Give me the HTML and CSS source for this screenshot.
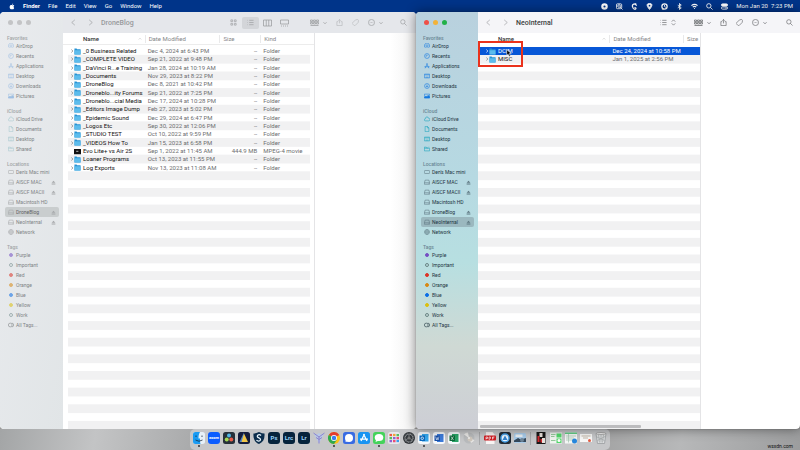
FILE: index.html
```html
<!DOCTYPE html>
<html lang="en">
<head>
<meta charset="utf-8">
<title>Finder</title>
<link rel="stylesheet" href="styles.css">
</head>
<body>
<svg class="sprite" aria-hidden="true">
  <symbol id="apple" viewBox="0 0 16 16"><path fill="currentColor" d="M11 0c.2 1.800-1.400 3.600-3 3.600C7.800 2 9.300.2 11 0zM13.800 11.700c-.8 1.900-2 3.900-3.500 3.900-1 0-1.300-.6-2.500-.6s-1.600.6-2.500.6C3 15.600.8 10.800 2 7.600 2.700 5.500 4.300 4.200 6 4.200c1.100 0 1.800.6 2.600.6s1.600-.7 3-.7c1 0 2 .5 2.600 1.400-2.700 1.600-2.200 5.200-.4 6.200z"/></symbol>
  <symbol id="back" viewBox="0 0 16 16"><path d="M11 2 4 8l7 6"/></symbol>
  <symbol id="forward" viewBox="0 0 16 16"><path d="m5 2 7 6-7 6"/></symbol>
  <symbol id="down" viewBox="0 0 16 16"><path d="m2 5 6 6 6-6"/></symbol>
  <symbol id="up" viewBox="0 0 16 16"><path d="m3 10 5-5 5 5"/></symbol>
  <symbol id="updown" viewBox="0 0 16 16"><path d="m4 6 4-4 4 4M4 10l4 4 4-4"/></symbol>
  <symbol id="grid" viewBox="0 0 16 16"><path d="M2 2h4v4H2zM10 2h4v4h-4zM2 10h4v4H2zM10 10h4v4h-4z"/></symbol>
  <symbol id="list" viewBox="0 0 16 16"><path d="M1 3h1M1 8h1M1 13h1M5 3h10M5 8h10M5 13h10"/></symbol>
  <symbol id="columns" viewBox="0 0 18 16"><path d="M1 2h16v12H1zM6.500 2v12M11.500 2v12"/></symbol>
  <symbol id="gallery" viewBox="0 0 18 16"><path d="M1 2h16v8H1zM2 14h2M6 14h2M10 14h2M14 14h2"/></symbol>
  <symbol id="group" viewBox="0 0 18 16"><path d="M1 2h4v3H1zM7 2h4v3H7zM13 2h4v3h-4zM1 7h4v3H1zM7 7h4v3H7zM13 7h4v3h-4zM1 13h16"/></symbol>
  <symbol id="share" viewBox="0 0 16 16"><path d="M5 6H2v9h12V6h-3M8 10V1M5 4l3-3 3 3"/></symbol>
  <symbol id="tag" viewBox="0 0 16 16"><path d="m1 9 7-7 5-1 2 2-1 5-7 7q-1 1-2 0l-4-4q-1-1 0-2zM12 4v.1"/></symbol>
  <symbol id="more" viewBox="0 0 16 16"><circle cx="8" cy="8" r="7"/><path d="M4 8h1.500M7.300 8h1.500M10.500 8H12"/></symbol>
  <symbol id="search" viewBox="0 0 16 16"><circle cx="6.500" cy="6.500" r="5"/><path d="m10 10 5 5"/></symbol>
  <symbol id="airdrop" viewBox="0 0 16 16"><path d="M4 13a7 7 0 1 1 8 0M6 10a3 3 0 1 1 4 0M8 8v5"/></symbol>
  <symbol id="clock" viewBox="0 0 16 16"><circle cx="8" cy="8" r="6.500"/><path d="M8 4v4H4"/></symbol>
  <symbol id="apps" viewBox="0 0 16 16"><path d="M9 1 3 14M7 1l6 13M1 10h14"/></symbol>
  <symbol id="desktop" viewBox="0 0 16 16"><path d="M1 3h14v10H1zM2 5h12M4 11h8"/></symbol>
  <symbol id="download" viewBox="0 0 16 16"><circle cx="8" cy="8" r="6.500"/><path d="M8 4v7M5 8l3 3 3-3"/></symbol>
  <symbol id="pictures" viewBox="0 0 16 16"><path d="M1 3h14v10H1z"/><path fill="currentColor" d="m1 12 4-4 3 2 3-4 4 4v3H1z"/></symbol>
  <symbol id="cloud" viewBox="0 0 16 16"><path d="M4 13a3 3 0 0 1 0-6 4 4 0 0 1 8-1 3.500 3.500 0 0 1 0 7z"/></symbol>
  <symbol id="doc" viewBox="0 0 16 16"><path d="M3 1h6l4 4v10H3zM9 1v4h4"/></symbol>
  <symbol id="shared" viewBox="0 0 16 16"><path d="M1 13V3h5l1 2h4M1 6h14v7H1M13 2v2"/></symbol>
  <symbol id="mini" viewBox="0 0 16 16"><rect x="1" y="4" width="14" height="8" rx="2"/></symbol>
  <symbol id="drive" viewBox="0 0 16 16"><path d="m1 10 2-7h10l2 7v4H1zM1 10h14M11 12h1"/></symbol>
  <symbol id="globe" viewBox="0 0 16 16"><circle cx="8" cy="8" r="6.500"/><path d="M1.500 8h13M8 1.500c-4 4-4 9 0 13 4-4 4-9 0-13"/></symbol>
  <symbol id="alltags" viewBox="0 0 16 16"><circle cx="6" cy="8" r="5"/><path d="M10 3a5 5 0 0 1 0 10"/></symbol>
  <symbol id="eject" viewBox="0 0 16 16"><path fill="currentColor" d="m8 2 6 7H2zM2 11h12v3H2z"/></symbol>
  <symbol id="folder" viewBox="0 0 16 16"><path fill="#2793d4" d="M1 1h5l1 2h8v12H1z"/><path fill="#5cbcec" d="M1 5h14v10H1z"/></symbol>
  <symbol id="movie" viewBox="0 0 16 16"><path fill="#111" d="M0 2h16v12H0z"/><path fill="#999" d="M5 6h5v3H5z"/></symbol>
</svg>

<header class="menubar">
  <nav class="menus" aria-label="Menu bar">
    <button aria-label="Apple"><svg class="apple"><use href="#apple"/></svg></button>
    <button class="app">Finder</button><button>File</button><button>Edit</button><button>View</button><button>Go</button><button>Window</button><button>Help</button>
  </nav>
  <div class="status">
    <svg viewBox="0 0 16 16"><circle cx="8" cy="8" r="5" stroke-width="5"/></svg>
    <svg viewBox="0 0 16 16"><rect x="1" y="2" width="12" height="11" rx="2"/><circle cx="7" cy="7" r="3"/><path d="m9 9 6 6"/></svg>
    <svg viewBox="0 0 16 16"><path stroke-width="3" d="M12 2C4 1 2 5 4 10s6 5 7 3-2-3-3-2M10 3l3 3"/></svg>
    <svg viewBox="0 0 16 16"><path fill="currentColor" d="M8 15C-2 3 4 1 8 1s10 2 0 14z"/><circle cx="8" cy="6" r="2" fill="#003489" stroke="none"/></svg>
    <svg viewBox="0 0 16 16"><circle cx="8" cy="8" r="6" stroke-width="3"/><path d="M8 4v4l3 2M2 14h5"/></svg>
    <svg viewBox="0 0 16 16"><path d="m4 5 8 6-4 4V1l4 4-8 6"/></svg>
    <svg viewBox="0 0 16 16"><path stroke-width="2.500" d="M1 6q7-6 14 0M4 9.500q4-3.500 8 0M7 12.500h2"/></svg>
    <svg><use href="#search"/></svg>
    <svg viewBox="0 0 16 16"><rect x="1" y="2" width="14" height="5" rx="2.500" fill="currentColor"/><rect x="1" y="9" width="14" height="5" rx="2.500"/><path d="M10 11.500h3"/></svg>
    <time>Mon Jan 20&nbsp; 7:23 PM</time>
  </div>
</header>

<main class="desk">
  <section class="window inactive" aria-label="DroneBlog">
    <aside class="sidebar">
      <div class="lights"><button aria-label="Close"></button><button aria-label="Minimize"></button><button aria-label="Zoom"></button></div>
      <h2>Favorites</h2>
      <ul class="blue">
        <li><a href="#"><svg><use href="#airdrop"/></svg>AirDrop</a></li>
        <li><a href="#"><svg><use href="#clock"/></svg>Recents</a></li>
        <li><a href="#"><svg><use href="#apps"/></svg>Applications</a></li>
        <li><a href="#"><svg><use href="#desktop"/></svg>Desktop</a></li>
        <li><a href="#"><svg><use href="#download"/></svg>Downloads</a></li>
        <li><a href="#"><svg><use href="#pictures"/></svg>Pictures</a></li>
      </ul>
      <h2>iCloud</h2>
      <ul class="teal">
        <li><a href="#"><svg><use href="#cloud"/></svg>iCloud Drive</a></li>
        <li><a href="#"><svg><use href="#doc"/></svg>Documents</a></li>
        <li><a href="#"><svg><use href="#desktop"/></svg>Desktop</a></li>
        <li><a href="#"><svg><use href="#shared"/></svg>Shared</a></li>
      </ul>
      <h2>Locations</h2>
      <ul class="grey">
        <li><a href="#"><svg><use href="#mini"/></svg>Den's Mac mini</a></li>
        <li><a href="#"><svg><use href="#drive"/></svg>AISCF MAC<svg class="eject"><use href="#eject"/></svg></a></li>
        <li><a href="#"><svg><use href="#drive"/></svg>AISCF MACII<svg class="eject"><use href="#eject"/></svg></a></li>
        <li><a href="#"><svg><use href="#drive"/></svg>Macintosh HD</a></li>
        <li><a href="#" class="current"><svg><use href="#drive"/></svg>DroneBlog<svg class="eject"><use href="#eject"/></svg></a></li>
        <li><a href="#"><svg><use href="#drive"/></svg>NeoInternal<svg class="eject"><use href="#eject"/></svg></a></li>
        <li><a href="#"><svg><use href="#globe"/></svg>Network</a></li>
      </ul>
      <h2>Tags</h2>
      <ul class="tags">
        <li><a href="#"><i class="purple"></i>Purple</a></li>
        <li><a href="#"><i></i>Important</a></li>
        <li><a href="#"><i class="red"></i>Red</a></li>
        <li><a href="#"><i class="orange"></i>Orange</a></li>
        <li><a href="#"><i class="azure"></i>Blue</a></li>
        <li><a href="#"><i class="yellow"></i>Yellow</a></li>
        <li><a href="#"><i></i>Work</a></li>
        <li><a href="#"><svg><use href="#alltags"/></svg>All Tags...</a></li>
      </ul>
    </aside>
    <div class="content">
      <div class="toolbar">
        <button aria-label="Back"><svg><use href="#back"/></svg></button>
        <button aria-label="Forward"><svg><use href="#forward"/></svg></button>
        <h1>DroneBlog</h1>
        <div class="views">
          <button aria-label="Icons"><svg><use href="#grid"/></svg></button>
          <button aria-label="List" class="on"><svg><use href="#list"/></svg></button>
          <button aria-label="Columns"><svg class="wide"><use href="#columns"/></svg></button>
          <button aria-label="Gallery"><svg class="wide"><use href="#gallery"/></svg></button>
        </div>
        <div class="actions">
          <button aria-label="Group"><svg class="wide"><use href="#group"/></svg><svg class="tiny"><use href="#down"/></svg></button>
          <button aria-label="Share" class="dim"><svg><use href="#share"/></svg></button>
          <button aria-label="Tags" class="dim"><svg><use href="#tag"/></svg></button>
          <button aria-label="More"><svg><use href="#more"/></svg><svg class="tiny"><use href="#down"/></svg></button>
          <button aria-label="Search" class="find"><svg><use href="#search"/></svg></button>
        </div>
      </div>
      <div class="panes">
        <table>
          <thead><tr><th class="sorted">Name<svg><use href="#up"/></svg></th><th>Date Modified</th><th>Size</th><th>Kind</th></tr></thead>
          <tbody>
            <tr><td><svg class="tw"><use href="#forward"/></svg><svg><use href="#folder"/></svg>_0 Business Related</td><td>Dec 4, 2024 at 6:43 PM</td><td>--</td><td>Folder</td></tr>
            <tr><td><svg class="tw"><use href="#forward"/></svg><svg><use href="#folder"/></svg>_COMPLETE VIDEO</td><td>Sep 21, 2022 at 9:48 PM</td><td>--</td><td>Folder</td></tr>
            <tr><td><svg class="tw"><use href="#forward"/></svg><svg><use href="#folder"/></svg>_DaVinci R...e Training</td><td>Jan 28, 2024 at 10:19 AM</td><td>--</td><td>Folder</td></tr>
            <tr><td><svg class="tw"><use href="#forward"/></svg><svg><use href="#folder"/></svg>_Documents</td><td>Nov 29, 2023 at 8:22 PM</td><td>--</td><td>Folder</td></tr>
            <tr><td><svg class="tw"><use href="#forward"/></svg><svg><use href="#folder"/></svg>_DroneBlog</td><td>Dec 8, 2021 at 10:42 PM</td><td>--</td><td>Folder</td></tr>
            <tr><td><svg class="tw"><use href="#forward"/></svg><svg><use href="#folder"/></svg>_Droneblo...ity Forums</td><td>Sep 21, 2022 at 7:25 PM</td><td>--</td><td>Folder</td></tr>
            <tr><td><svg class="tw"><use href="#forward"/></svg><svg><use href="#folder"/></svg>_Droneblo...cial Media</td><td>Dec 17, 2024 at 10:28 PM</td><td>--</td><td>Folder</td></tr>
            <tr><td><svg class="tw"><use href="#forward"/></svg><svg><use href="#folder"/></svg>_Editors Image Dump</td><td>Feb 27, 2023 at 5:02 PM</td><td>--</td><td>Folder</td></tr>
            <tr><td><svg class="tw"><use href="#forward"/></svg><svg><use href="#folder"/></svg>_Epidemic Sound</td><td>Dec 29, 2024 at 6:47 PM</td><td>--</td><td>Folder</td></tr>
            <tr><td><svg class="tw"><use href="#forward"/></svg><svg><use href="#folder"/></svg>_Logos Etc</td><td>Sep 30, 2022 at 12:06 PM</td><td>--</td><td>Folder</td></tr>
            <tr><td><svg class="tw"><use href="#forward"/></svg><svg><use href="#folder"/></svg>_STUDIO TEST</td><td>Oct 10, 2022 at 9:59 PM</td><td>--</td><td>Folder</td></tr>
            <tr><td><svg class="tw"><use href="#forward"/></svg><svg><use href="#folder"/></svg>_VIDEOS How To</td><td>Jan 15, 2023 at 6:58 PM</td><td>--</td><td>Folder</td></tr>
            <tr><td><svg class="tw"></svg><svg><use href="#movie"/></svg>Evo Lite+ vs Air 2S</td><td>Sep 1, 2022 at 11:45 AM</td><td>444.9 MB</td><td>MPEG-4 movie</td></tr>
            <tr><td><svg class="tw"><use href="#forward"/></svg><svg><use href="#folder"/></svg>Loaner Programs</td><td>Oct 13, 2023 at 11:55 PM</td><td>--</td><td>Folder</td></tr>
            <tr><td><svg class="tw"><use href="#forward"/></svg><svg><use href="#folder"/></svg>Log Exports</td><td>Nov 13, 2023 at 11:08 AM</td><td>--</td><td>Folder</td></tr>
          </tbody>
        </table>
        <div class="preview"></div>
      </div>
    </div>
  </section>

  <section class="window active" aria-label="NeoInternal">
    <aside class="sidebar">
      <div class="lights"><button aria-label="Close"></button><button aria-label="Minimize"></button><button aria-label="Zoom"></button></div>
      <h2>Favorites</h2>
      <ul class="blue">
        <li><a href="#"><svg><use href="#airdrop"/></svg>AirDrop</a></li>
        <li><a href="#"><svg><use href="#clock"/></svg>Recents</a></li>
        <li><a href="#"><svg><use href="#apps"/></svg>Applications</a></li>
        <li><a href="#"><svg><use href="#desktop"/></svg>Desktop</a></li>
        <li><a href="#"><svg><use href="#download"/></svg>Downloads</a></li>
        <li><a href="#"><svg><use href="#pictures"/></svg>Pictures</a></li>
      </ul>
      <h2>iCloud</h2>
      <ul class="teal">
        <li><a href="#"><svg><use href="#cloud"/></svg>iCloud Drive</a></li>
        <li><a href="#"><svg><use href="#doc"/></svg>Documents</a></li>
        <li><a href="#"><svg><use href="#desktop"/></svg>Desktop</a></li>
        <li><a href="#"><svg><use href="#shared"/></svg>Shared</a></li>
      </ul>
      <h2>Locations</h2>
      <ul class="grey">
        <li><a href="#"><svg><use href="#mini"/></svg>Den's Mac mini</a></li>
        <li><a href="#"><svg><use href="#drive"/></svg>AISCF MAC<svg class="eject"><use href="#eject"/></svg></a></li>
        <li><a href="#"><svg><use href="#drive"/></svg>AISCF MACII<svg class="eject"><use href="#eject"/></svg></a></li>
        <li><a href="#"><svg><use href="#drive"/></svg>Macintosh HD</a></li>
        <li><a href="#"><svg><use href="#drive"/></svg>DroneBlog<svg class="eject"><use href="#eject"/></svg></a></li>
        <li><a href="#" class="current"><svg><use href="#drive"/></svg>NeoInternal<svg class="eject"><use href="#eject"/></svg></a></li>
        <li><a href="#"><svg><use href="#globe"/></svg>Network</a></li>
      </ul>
      <h2>Tags</h2>
      <ul class="tags">
        <li><a href="#"><i class="purple"></i>Purple</a></li>
        <li><a href="#"><i></i>Important</a></li>
        <li><a href="#"><i class="red"></i>Red</a></li>
        <li><a href="#"><i class="orange"></i>Orange</a></li>
        <li><a href="#"><i class="azure"></i>Blue</a></li>
        <li><a href="#"><i class="yellow"></i>Yellow</a></li>
        <li><a href="#"><i></i>Work</a></li>
        <li><a href="#"><svg><use href="#alltags"/></svg>All Tags...</a></li>
      </ul>
    </aside>
    <div class="content">
      <div class="toolbar">
        <button aria-label="Back" class="dim"><svg><use href="#back"/></svg></button>
        <button aria-label="Forward" class="dim"><svg><use href="#forward"/></svg></button>
        <h1>NeoInternal</h1>
        <div class="views">
          <button aria-label="View as list"><svg><use href="#list"/></svg><svg><use href="#updown"/></svg></button>
        </div>
        <div class="actions">
          <button aria-label="Group"><svg class="wide"><use href="#group"/></svg><svg class="tiny"><use href="#down"/></svg></button>
          <button aria-label="Share"><svg><use href="#share"/></svg></button>
          <button aria-label="Tags"><svg><use href="#tag"/></svg></button>
          <button aria-label="More"><svg><use href="#more"/></svg><svg class="tiny"><use href="#down"/></svg></button>
          <button aria-label="Search" class="find"><svg><use href="#search"/></svg></button>
        </div>
      </div>
      <div class="panes">
        <table>
          <thead><tr><th class="sorted">Name<svg><use href="#up"/></svg></th><th>Date Modified</th><th>Size</th></tr></thead>
          <tbody>
            <tr class="selected"><td><svg class="tw"><use href="#forward"/></svg><svg><use href="#folder"/></svg>DCIM</td><td>Dec 24, 2024 at 10:58 PM</td><td></td></tr>
            <tr><td><svg class="tw"><use href="#forward"/></svg><svg><use href="#folder"/></svg>MISC</td><td>Jan 1, 2025 at 2:56 PM</td><td></td></tr>
          </tbody>
        </table>
        <div class="preview"></div>
        <div class="highlight"></div>
        <svg class="cursor" viewBox="0 0 10 14"><path d="M1 1v10l2.500-2 2 4 2-1-2-4H9z"/></svg>
        <div class="scrollbar"></div>
      </div>
    </div>
  </section>
</main>

<footer class="shelf">
  <nav class="dock" aria-label="Dock">
    <button class="open" aria-label="Finder"><svg viewBox="0 0 24 24"><rect width="24" height="24" rx="5" fill="#e8f1f8"/><path fill="#1a9bf3" d="M5 0h9c-3 5-3 9-3 13h3c0 4 0 8 1 11H5a5 5 0 0 1-5-5V5a5 5 0 0 1 5-5z"/><path d="M6 7v3M18 7v3M5 16q7 5 14 0" stroke="#123" fill="none" stroke-width="1.500"/></svg></button>
    <button class="tile zoom">zoom</button>
    <button aria-label="DaVinci Resolve"><svg viewBox="0 0 24 24"><rect width="24" height="24" rx="5" fill="#26303a"/><circle cx="12" cy="7" r="4" fill="#52b6e3"/><circle cx="7.500" cy="15" r="4" fill="#a6d854"/><circle cx="16.500" cy="15" r="4" fill="#ec5b48"/></svg></button>
    <button aria-label="Luminar"><svg viewBox="0 0 24 24"><rect width="24" height="24" rx="5" fill="#141c3c"/><path fill="#4d83c6" d="M12 1 3 20h9z"/><path fill="#f1c64a" d="m12 3 8 17H7z"/></svg></button>
    <button aria-label="Shield"><svg viewBox="0 0 24 24"><path fill="#0b2d4c" d="M12 0q6 3 11 3c1 11-3 18-11 21C4 21 0 14 1 3q5 0 11-3z"/><path d="M16 7c-3-3-9-1-7 3 2 2 6 2 6 5 0 4-6 4-8 1" fill="none" stroke="#e7f3fa" stroke-width="2.500"/></svg></button>
    <button class="tile adobe">Ps</button>
    <button class="tile adobe">Lrc</button>
    <button class="tile adobe">Lr</button>
    <button aria-label="Plans"><svg viewBox="0 0 24 24"><path d="m1 2 11 21L23 2l-7 3-4-3-4 3z" fill="#b7c9e8"/><path d="m1 2 11 8L23 2M12 10v13M6 11l6 4 6-4" stroke="#8d83cd" fill="none" stroke-width="2"/></svg></button>
    <button class="open" aria-label="Chrome"><svg viewBox="0 0 24 24"><circle cx="12" cy="12" r="12" fill="#fbc116"/><path fill="#e33b2e" d="M12 12 1.600 6a12 12 0 0 1 20.800 0z"/><path fill="#2da94f" d="M12 12 1.600 6A12 12 0 0 0 12 24l6-9z"/><circle cx="12" cy="12" r="6" fill="#fff"/><circle cx="12" cy="12" r="4.500" fill="#3b7ded"/></svg></button>
    <button aria-label="Signal"><svg viewBox="0 0 24 24"><rect width="24" height="24" rx="5" fill="#386be3"/><circle cx="12" cy="12" r="8" fill="#fff"/><path d="m5 20 1-6 5 4z" fill="#fff"/></svg></button>
    <button aria-label="App Store"><svg viewBox="0 0 24 24"><rect width="24" height="24" rx="5" fill="#1894f2"/><path d="M13 4 6 18M11 4l7 14M4 14h16" stroke="#fff" stroke-width="2.500"/></svg></button>
    <button class="open" aria-label="Messages"><svg viewBox="0 0 24 24"><rect width="24" height="24" rx="5" fill="#45d35b"/><ellipse cx="12" cy="11" rx="8.500" ry="7" fill="#fff"/><path d="m5 20 2-6 5 3z" fill="#fff"/></svg></button>
    <button aria-label="Launchpad"><svg viewBox="0 0 24 24"><rect width="24" height="24" rx="5" fill="#e7e8ec"/><path stroke-width="4.500" stroke="#ee5944" d="M3 6h5"/><path stroke-width="4.500" stroke="#f2a13b" d="M10 6h5"/><path stroke-width="4.500" stroke="#56bd5a" d="M17 6h5M3 12h5"/><path stroke-width="4.500" stroke="#8d61d2" d="M10 12h5M3 18h5"/><path stroke-width="4.500" stroke="#ec4c75" d="M17 12h5M10 18h5"/><path stroke-width="4.500" stroke="#3a9cea" d="M17 18h5"/></svg></button>
    <button aria-label="Settings"><svg viewBox="0 0 24 24"><circle cx="12" cy="12" r="12" fill="#34383c"/><circle cx="12" cy="12" r="8" fill="none" stroke="#979a9d" stroke-width="2.500" stroke-dasharray="2 1"/><path d="M12 12V4m0 8 7 4m-7-4-7 4" stroke="#8b8d90" stroke-width="1.500"/><circle cx="12" cy="12" r="3" fill="#777"/></svg></button>
    <button class="open" aria-label="Outlook"><svg viewBox="0 0 24 24"><rect width="24" height="24" rx="5" fill="#f5f8fb"/><path fill="#35a6eb" d="M8 4h13v15H8z"/><path fill="#0968bd" d="M3 7h11v11H3z"/><circle cx="8.500" cy="12.500" r="2.500" fill="none" stroke="#fff" stroke-width="1.500"/></svg></button>
    <button aria-label="Word"><svg viewBox="0 0 24 24"><rect width="24" height="24" rx="5" fill="#f5f8fb"/><path fill="#3c7bd9" d="M8 4h13v16H8z"/><path fill="#174fa8" d="M3 7h11v11H3z"/><path d="m5 9 2 7 1.500-5 1.500 5 2-7" fill="none" stroke="#fff" stroke-width="1"/></svg></button>
    <button aria-label="Excel"><svg viewBox="0 0 24 24"><rect width="24" height="24" rx="5" fill="#f5f8fb"/><path fill="#2aa466" d="M8 4h13v16H8z"/><path fill="#0c693a" d="M3 7h11v11H3z"/><path d="m6 9 5 7M11 9l-5 7" stroke="#fff" stroke-width="1.200"/></svg></button>
    <button aria-label="Disk"><svg viewBox="0 0 24 24"><circle cx="12" cy="12" r="11" fill="#b8babc"/><path fill="#e7e6e4" d="M12 12 2 5a12 12 0 0 1 8-4zM12 12l11 4a12 12 0 0 1-7 6z"/><circle cx="14" cy="14" r="5" fill="#cfc7bd"/><circle cx="12" cy="12" r="2" fill="#eee"/></svg></button>
    <hr>
    <button aria-label="PDF"><svg viewBox="0 0 24 24"><path fill="#f7f3f2" d="M4 0h13l4 5v19H4z"/><rect y="7" width="24" height="10" rx="2" fill="#cf1d23"/><path d="M4 15v-5h3v3H4M10 10v5q4-1 3-5zM17 15v-5h4M17 12h3" fill="none" stroke="#fff" stroke-width="1.300"/></svg></button>
    <button aria-label="Quick Look"><svg viewBox="0 0 24 24"><rect width="24" height="24" rx="5" fill="#222b35"/><circle cx="12" cy="12" r="8" fill="#e8f4ff" stroke="#49a3e9" stroke-width="3"/><path d="m7 16 5-9 5 9z" fill="#3280ca"/></svg></button>
    <button aria-label="Preview"><svg viewBox="0 0 24 24"><rect y="2" width="24" height="20" rx="3" fill="#a8cbea"/><path fill="#34485b" d="m0 17 8-5 6 3 10-3v8H0z"/><path fill="#e9eef2" d="M3 5h14v5H3z"/><circle cx="16" cy="16" r="4" fill="#6e8599"/></svg></button>
    <hr>
    <button aria-label="Downloads"><svg viewBox="0 0 24 24"><path fill="#191717" d="M3 0h18v24H3z"/><path fill="#e9e1dc" d="M9 2h6v8H9zM14 12h6v10h-6z"/><path fill="#d2282d" d="M5 8h4v12H5zM11 14h3v7h-3z"/></svg></button>
    <button aria-label="Minimized window 1"><svg viewBox="0 0 24 24"><path fill="#f0f5f0" d="M0 1h24v22H0z"/><path fill="#53d76c" d="M13 3h10v8H13zM13 13h10v9H13z"/><path stroke="#77bb80" d="M2 5h9M2 9h7M2 17h9"/><circle cx="18" cy="17" r="3" fill="#fff"/></svg></button>
    <button aria-label="Minimized window 2"><svg viewBox="0 0 24 24"><path fill="#f4f7f5" d="M0 1h24v22H0z"/><path fill="#63ce86" d="M0 1h24v3H0z"/><path stroke="#a6c5b1" d="M2 8h20M2 12h16M2 16h14M7 4v17"/><circle cx="19" cy="18" r="5" fill="#2787dc"/></svg></button>
    <button aria-label="Minimized window 3"><svg viewBox="0 0 24 24"><path fill="#f8f8f7" d="M0 4h24v16H0z"/><path stroke="#c4b8a9" stroke-width="2" d="M3 8h18M6 12h10"/><circle cx="19" cy="17" r="3" fill="#e55b42"/></svg></button>
    <button aria-label="Trash"><svg viewBox="0 0 24 24"><path fill="#dcdedf" stroke="#96999c" d="M2 3h20l-3 20H5z"/><path stroke="#a4a8aa" d="m7 5 2 16m3-16v16m5-16-2 16M4 10l15 7M20 9 5 17"/><ellipse cx="12" cy="3" rx="10" ry="2" fill="#f0f0f0" stroke="#999"/></svg></button>
  </nav>
  <small>wsxdn.com</small>
</footer>
</body>
</html>
```
FILE: styles.css
```css
* { box-sizing: border-box; }

body {
  margin: 0;
  min-height: 100vh;
  display: grid;
  grid-template-rows: 12px 1fr 21px;
  overflow: hidden;
  background: #003489;
  color: #333;
  font: 6px/8px Roboto, "Liberation Sans", sans-serif;
}

.sprite { position: absolute; width: 0; height: 0; }

svg {
  flex: none;
  width: 7px;
  height: 7px;
  fill: none;
  stroke: currentColor;
  stroke-width: 1.5;
}

button {
  display: flex;
  align-items: center;
  padding: 0;
  border: 0;
  background: none;
  color: inherit;
  font: inherit;
}

a { color: inherit; text-decoration: none; }
h1, h2, ul { margin: 0; padding: 0; list-style: none; }

/* Menu bar */
.menubar {
  display: flex;
  justify-content: space-between;
  align-items: center;
  padding: 0 7px 0 9px;
  color: #fff;
}
.menus { display: flex; gap: 8px; }
.apple { width: 6px; height: 7px; stroke: none; }
.app { font-weight: 700; }
.status { display: flex; align-items: center; gap: 8px; }
.status svg { stroke-width: 2; }

/* Windows */
.desk {
  display: grid;
  grid-template-columns: 52fr 48fr;
  min-height: 0;
  background: linear-gradient(#003489 50%, #999 50%);
}
.window {
  display: grid;
  grid-template-columns: var(--side) minmax(0, 1fr);
  overflow: hidden;
  min-height: 0;
  border-radius: 4px;
  background: #fff;
}
.inactive { --side: 63px; }
.active {
  --side: 62px;
  position: relative;
  overflow: visible;
  box-shadow: 0 0 12px #0007, 0 0 1px #0008;
}

.sidebar {
  padding: 0 4px 0 5px;
  border-radius: 4px 0 0 4px;
  color: #1d343f;
  font-size: 5px;
  white-space: nowrap;
  background: linear-gradient(#b9d1de, #b6d9e2 40%, #b7dfe1 60%, #cfd9d4 80%, #cdced5);
}
.inactive .sidebar {
  color: #808486;
  background: linear-gradient(100deg, #e9ebee, #e1e5e7);
}
.lights { display: flex; align-items: center; gap: 4px; height: 20px; margin-bottom: 3px; padding-left: 3px; }
.lights button { width: 5px; height: 5px; border-radius: 50%; background: #c3c4c6; }
.active .lights button:nth-child(1) { background: #ee5148; }
.active .lights button:nth-child(2) { background: #f3b338; }
.active .lights button:nth-child(3) { background: #22b148; }

.sidebar h2 { padding-left: 2px; font-size: 5px; line-height: 6px; font-weight: 500; color: #6a8795; }
.inactive .sidebar h2 { color: #a3a6a8; }
.sidebar ul { margin-bottom: 7px; }
.sidebar a { display: flex; align-items: center; gap: 2px; height: 10px; padding: 0 3px; border-radius: 2px; }
.sidebar svg { width: 6px; height: 6px; }
.sidebar .eject { width: 5px; height: 5px; margin-left: auto; stroke: none; }
.sidebar .current { background: #9bb8bf; }
.inactive .sidebar .current { background: #c9cdce; color: #5f6365; }
.blue svg { color: #1479e0; }
.teal svg { color: #16a3bb; }
.grey svg { color: #5d7680; }
.inactive .blue svg { color: #9ebfe2; }
.inactive .teal svg { color: #a5c8ce; }
.inactive .grey svg { color: #a5a8aa; }
.tags i { width: 4px; height: 4px; margin: 0 1px; border: 1px solid #6a8585; border-radius: 50%; }
.tags .purple { background: #7650c4; border-color: #7650c4; }
.tags .red { background: #dc3528; border-color: #dc3528; }
.tags .orange { background: #d88914; border-color: #d88914; }
.tags .azure { background: #0c6fe6; border-color: #0c6fe6; }
.tags .yellow { background: #dcc010; border-color: #dcc010; }
.inactive .tags i { opacity: .55; }

/* Toolbar */
.content { display: flex; flex-direction: column; min-width: 0; min-height: 0; }
.toolbar { display: flex; align-items: center; height: 21px; padding: 0 7px; gap: 7px; background: #f5f5f8; color: #66686b; }
.toolbar > button:first-child { margin-right: 3px; }
.inactive .toolbar { padding-right: 9px; background: #e5e7eb; color: #9a9c9f; }
.toolbar h1 { font-size: 7px; font-weight: 500; color: #3c3d40; }
.inactive .toolbar h1 { color: #97999c; }
.toolbar .wide { width: 9px; height: 8px; }
.toolbar .tiny { width: 4px; height: 4px; stroke-width: 3; }
.toolbar .dim { opacity: .6; }
.views { display: flex; margin-left: auto; }
.views button { justify-content: center; width: 17px; height: 12px; border-radius: 2px; gap: 3px; }
.views .on { background: #d3d5d9; }
.actions { display: flex; align-items: center; gap: 9px; margin-left: 10px; }
.actions button { gap: 4px; }
.actions .find { margin-left: 10px; }
.inactive .actions .find { margin-left: 8px; }

/* File list */
.panes { position: relative; display: grid; grid-template-columns: 252fr 101fr; flex: 1; min-height: 0; overflow: hidden; }
.active .panes { grid-template-columns: 223fr 99fr; border-radius: 0 0 4px 0; }
table { display: flex; flex-direction: column; min-height: 0; border-right: 1px solid #e4e4e6; }
thead { border-bottom: 1px solid #ececec; margin-bottom: 2px; }
.active thead { border-color: #fff; }
tr {
  display: grid;
  grid-template-columns: minmax(0, 82fr) minmax(0, 75fr) minmax(0, 41fr) minmax(0, 54fr);
  align-items: center;
}
.active tr { grid-template-columns: minmax(0, 132fr) minmax(0, 74fr) minmax(0, 17fr); }
th, td { display: flex; align-items: center; padding: 0 3px; white-space: nowrap; }
th { height: 11px; font-weight: 400; color: #858688; }
th + th { border-left: 1px solid #e9e9ea; height: 8px; }
.sorted { justify-content: space-between; padding-left: 20px; font-weight: 500; color: #333; }
.sorted svg { width: 4px; height: 4px; color: #999; }
tbody {
  display: grid;
  grid-template-rows: repeat(46, minmax(0, 1fr));
  flex: 1;
  min-height: 0;
  margin-bottom: -1px;
  background: linear-gradient(transparent 50%, #f1f1f2 50%) 0 0 / 100% calc(100% / 23);
}
.inactive tbody { margin-left: 5px; margin-right: 4px; }
.inactive tbody tr { margin-left: -5px; margin-right: -4px; }
td { color: #6c6d6f; }
td:first-child { gap: 2px; padding-left: 7px; color: #111; }
td .tw { width: 4px; height: 4px; margin-right: -2px; stroke-width: 2.5; color: #777; }
.inactive td:nth-child(3) { justify-content: flex-end; }
td:first-child svg:not(.tw) { stroke: none; }
.selected { align-self: stretch; background: #0757d7; }
.selected td, .selected td:first-child, .selected .tw { color: #fff; }
.inactive .preview { background: linear-gradient(90deg, #fff 75%, #f1f1f1); }

.highlight { position: absolute; left: 0; top: 8px; width: 45px; height: 26px; border: 2px solid #ea321c; }
.cursor { position: absolute; left: 28px; top: 16px; width: 6px; height: 8px; fill: #000; stroke: #fff; stroke-width: 1; }
.scrollbar { position: absolute; left: 2px; bottom: 1px; width: 50%; height: 3px; border-radius: 1px; background: #bcbcbe; }

/* Dock */
.shelf {
  display: grid;
  grid-template-columns: 1fr auto 1fr;
  background: linear-gradient(100deg, #a3a5a6, #c3c4c5 12%, #aaabac 24%, #999 70%, #b7b8b9 85%, #9c9d9e);
}
.dock {
  grid-column: 2;
  display: flex;
  gap: 3px;
  padding: 3px 3px 0;
  border-radius: 5px;
  background: #c6c7c9;
}
.dock button { flex-direction: column; width: 12px; height: 16px; }
.dock svg { width: 12px; height: 12px; stroke: none; }
.dock button::after { content: ""; width: 2px; height: 2px; margin-top: 1px; border-radius: 50%; }
.dock .open::after { background: #333; }
.dock .tile { justify-content: center; height: 12px; border-radius: 3px; font-weight: 700; }
.dock .tile::after { display: none; }
.dock .adobe { background: #06233c; color: #9bd5fa; }
.dock .zoom { background: #0b5cff; color: #fff; font-size: 4px; }
.dock hr { width: 1px; height: 13px; margin: 0 1px; border: 0; background: #a7a8aa; }
.shelf small { justify-self: end; align-self: end; padding: 0 7px 0 0; font-size: 5px; color: #111; }
```
